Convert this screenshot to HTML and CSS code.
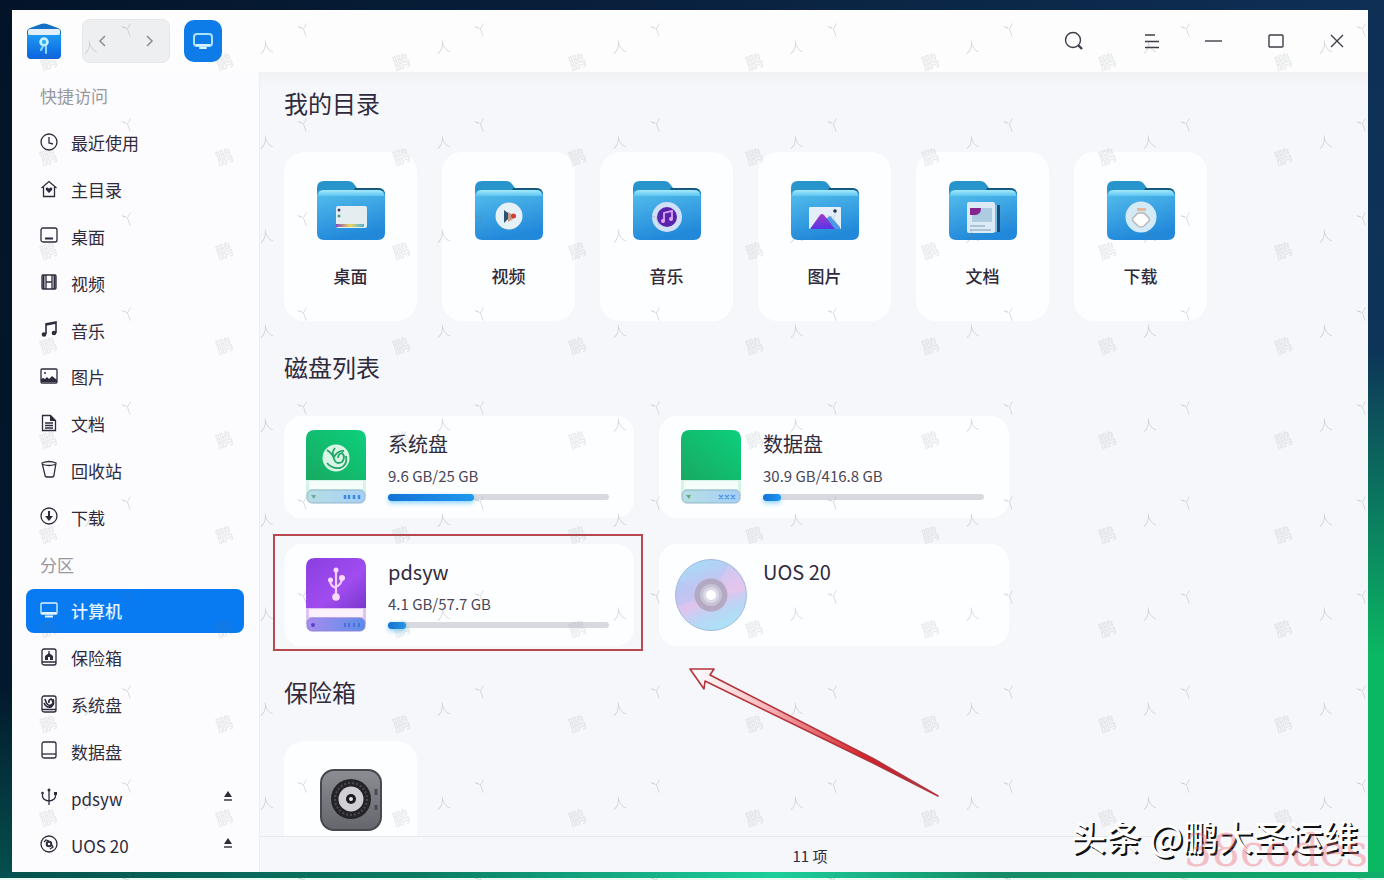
FILE: index.html
```html
<!DOCTYPE html>
<html lang="zh-CN">
<head>
    <meta charset="UTF-8">
    <meta name="viewport" content="width=device-width, initial-scale=1.0">
    <title>计算机</title>
    <link rel="stylesheet" href="styles.css">
</head>
<body>
    <!-- Shared shapes -->
    <svg class="defs" aria-hidden="true">
        <defs>
            <linearGradient id="folder-front" x1="0" y1="0" x2="0.3" y2="1">
                <stop offset="0" stop-color="#55bfec"/>
                <stop offset="1" stop-color="#2289da"/>
            </linearGradient>
            <linearGradient id="folder-shine" x1="0" y1="0" x2="0" y2="1">
                <stop offset="0" stop-color="#a5eaff"/>
                <stop offset="1" stop-color="#5cc5ef"/>
            </linearGradient>
            <linearGradient id="green" x1="1" y1="0" x2="0" y2="1">
                <stop offset="0" stop-color="#0cd07d"/>
                <stop offset="1" stop-color="#18a961"/>
            </linearGradient>
            <linearGradient id="purple" x1="0" y1="0" x2="1" y2="1">
                <stop offset="0" stop-color="#8a3fe0"/>
                <stop offset="0.6" stop-color="#a04cf0"/>
                <stop offset="1" stop-color="#7a38cc"/>
            </linearGradient>
            <linearGradient id="base-green" x1="0" y1="0" x2="1" y2="0">
                <stop offset="0" stop-color="#b5dfe3"/>
                <stop offset="1" stop-color="#a7cff8"/>
            </linearGradient>
            <linearGradient id="base-purple" x1="0" y1="0" x2="1" y2="0">
                <stop offset="0" stop-color="#a78cf0"/>
                <stop offset="1" stop-color="#5b8ee8"/>
            </linearGradient>
            <linearGradient id="mountain" x1="0" y1="0" x2="0" y2="1">
                <stop offset="0" stop-color="#a03cc8"/>
                <stop offset="1" stop-color="#5a34e8"/>
            </linearGradient>
            <linearGradient id="dock" x1="0" y1="0" x2="1" y2="0">
                <stop offset="0" stop-color="#8b4bb8"/>
                <stop offset="0.5" stop-color="#e8d85a"/>
                <stop offset="1" stop-color="#48b0e0"/>
            </linearGradient>
            <linearGradient id="safe-body" x1="0" y1="0" x2="0" y2="1">
                <stop offset="0" stop-color="#8d8d94"/>
                <stop offset="1" stop-color="#64656d"/>
            </linearGradient>
            <linearGradient id="disc" x1="0.3" y1="0" x2="0.7" y2="1">
                <stop offset="0" stop-color="#a5dcf6"/>
                <stop offset="0.3" stop-color="#bfc7f3"/>
                <stop offset="0.55" stop-color="#e0c4ee"/>
                <stop offset="0.75" stop-color="#b9d6f6"/>
                <stop offset="1" stop-color="#a9e6f6"/>
            </linearGradient>
            <linearGradient id="logo-body" x1="0" y1="0" x2="0" y2="1">
                <stop offset="0" stop-color="#1c9cf2"/>
                <stop offset="1" stop-color="#0c62e0"/>
            </linearGradient>
            <linearGradient id="arrow-fill" x1="0" y1="0" x2="1" y2="0">
                <stop offset="0" stop-color="#fff" stop-opacity="0.6"/>
                <stop offset="0.3" stop-color="#f7b9bc"/>
                <stop offset="0.7" stop-color="#d8232c"/>
                <stop offset="1" stop-color="#a5242c"/>
            </linearGradient>
            <symbol id="folder" viewBox="0 0 70 60">
                <path d="M1 14V8q0-7 7-7h24q4 0 6 3l3 4h21q7 0 7 7v8H1z" fill="#2795cb"/>
                <path d="M39 8h23q7 0 7 7l-2-2q-1-3-6-3H38z" fill="#17587c"/>
                <path d="M1 16q0-6 6-6h56q6 0 6 6v37q0 7-7 7H8q-7 0-7-7z" fill="url(#folder-front)"/>
                <path d="M2 16q0-6 6-6h54q6 0 6 6H2z" fill="url(#folder-shine)"/>
            </symbol>
            <symbol id="eject" viewBox="0 0 10 12">
                <path d="M5 1l4 6H1z" fill="#2f2a3c"/>
                <path d="M1 10h8" stroke="#2f2a3c" stroke-width="1.4"/>
            </symbol>
        </defs>
    </svg>

    <div class="desktop">
        <div class="window">
            <header class="titlebar">
                <svg class="logo" viewBox="0 0 36 36" aria-hidden="true">
                    <path d="M1 9q0-3 3-4l11-4q3-1 6 0l11 4q3 1 3 4v7H1z" fill="#1471c6"/>
                    <path d="M2 8q0-2 2-2h28q2 0 2 2v6H2z" fill="#e2eff8"/>
                    <path d="M1 11l3 1h28l3-1v21q0 4-4 4H5q-4 0-4-4z" fill="url(#logo-body)"/>
                    <circle cx="18" cy="19" r="3.500" fill="#35b4f2" stroke="#cdf1ff" stroke-width="2.500"/>
                    <path d="M17 23l-2 4M20 23v7" stroke="#8ed8fb" stroke-width="2" stroke-linecap="round"/>
                </svg>
                <div class="history">
                    <button type="button" aria-label="后退"><svg viewBox="0 0 12 14"><path d="M8 2L3 7l5 5"/></svg></button>
                    <button type="button" aria-label="前进"><svg viewBox="0 0 12 14"><path d="M4 2l5 5-5 5"/></svg></button>
                </div>
                <button type="button" class="location" aria-label="计算机">
                    <svg viewBox="0 0 20 18"><rect x="1" y="2" width="18" height="12" rx="3" fill="none" stroke="#a9e3ff" stroke-width="2"/><path d="M2 12h16l-2 2H4z" fill="#d9f4ff"/><path d="M7 16h6" stroke="#d9f4ff" stroke-width="2" stroke-linecap="round"/></svg>
                </button>
                <div class="controls">
                    <button type="button" aria-label="搜索"><svg viewBox="0 0 20 20"><circle cx="10" cy="9" r="7.500"/><path d="M15.500 14.500L19 18" stroke-width="2.400"/></svg></button>
                    <button type="button" class="wide" aria-label="菜单"><svg viewBox="0 0 20 20"><path d="M4 4h10M4 10.500h14M4 16.500h14"/></svg></button>
                    <button type="button" aria-label="最小化"><svg viewBox="0 0 20 20"><path d="M2 10h17"/></svg></button>
                    <button type="button" aria-label="最大化"><svg viewBox="0 0 20 20"><rect x="4" y="4" width="14" height="12" rx="1"/></svg></button>
                    <button type="button" aria-label="关闭"><svg viewBox="0 0 20 20"><path d="M4 4l12 12M16 4L4 16"/></svg></button>
                </div>
            </header>

            <div class="body">
                <nav class="sidebar" aria-label="位置">
                    <h2 class="group">快捷访问</h2>
                    <a class="place" href="#recent"><svg class="icon" viewBox="0 0 18 18"><circle cx="9" cy="9" r="8"/><path d="M9 4v6l4 1"/></svg>最近使用</a>
                    <a class="place" href="#home"><svg class="icon" viewBox="0 0 18 18"><path d="M1.500 8L9 1.500 16.500 8M3.500 7v9.500h11V7"/><path class="solid" d="M9 13L6 10q-1-2 1-2.500 1.300 0 2 1.200.7-1.200 2-1.200 2 .5 1 2.500z"/></svg>主目录</a>
                    <a class="place" href="#desktop"><svg class="icon" viewBox="0 0 18 18"><rect x="1" y="2" width="16" height="14" rx="2"/><path d="M5 12.500h8" stroke-width="2"/></svg>桌面</a>
                    <a class="place" href="#videos"><svg class="icon" viewBox="0 0 18 18"><rect x="2" y="2" width="14" height="14" rx="1"/><path d="M3.500 2v14M14.500 2v14" stroke-width="2"/><path d="M6 2v14M12 2v14M6 9h6"/></svg>视频</a>
                    <a class="place" href="#music"><svg class="icon" viewBox="0 0 18 18"><path d="M6 14V4l10-2v11M6 5l10-2" stroke-width="1.600"/><circle class="solid" cx="4" cy="14.500" r="2.300"/><circle class="solid" cx="14" cy="13" r="2.300"/></svg>音乐</a>
                    <a class="place" href="#pictures"><svg class="icon" viewBox="0 0 18 18"><rect x="1" y="2" width="16" height="14" rx="1"/><path class="solid" d="M1 15v-3l2-1 2 1 2-2 2 2 3-3 5 4v2z"/><circle class="solid" cx="5" cy="6" r="1"/></svg>图片</a>
                    <a class="place" href="#documents"><svg class="icon" viewBox="0 0 18 18"><path d="M2.500 1.500h8l5 5v10h-13z"/><path class="solid" d="M10 1l6 6h-6z"/><path d="M5 9h8M5 11.500h8M5 14h8"/></svg>文档</a>
                    <a class="place" href="#trash"><svg class="icon" viewBox="0 0 18 18"><path d="M2 3q7-3 14 0l-2 12q0 2-2 2H7q-2 0-2-2zM3 4.500q6 2 12 0"/></svg>回收站</a>
                    <a class="place" href="#downloads"><svg class="icon" viewBox="0 0 18 18"><circle cx="9" cy="9" r="8"/><path d="M9 4v8" stroke-width="2"/><path class="solid" d="M5 9h8l-4 5z"/></svg>下载</a>
                    <h2 class="group">分区</h2>
                    <a class="place active" href="#computer" aria-current="page"><svg class="icon" viewBox="0 0 18 18"><rect x="1" y="2" width="16" height="11" rx="1"/><path d="M2 12h14" stroke-width="2"/><path d="M5 15.500h8" stroke-width="2"/></svg>计算机</a>
                    <a class="place" href="#vault"><svg class="icon" viewBox="0 0 18 18"><rect x="2" y="1" width="14" height="16" rx="2"/><path d="M2 14h14M9 3v3"/><path class="solid" d="M5 8l4-3 4 3v4h-3V9H8v3H5z"/></svg>保险箱</a>
                    <a class="place" href="#system"><svg class="icon" viewBox="0 0 18 18"><rect x="2" y="1" width="14" height="16" rx="2"/><path d="M2 14.500h14M5 4q2 8 6 6t0-6q-3 1-2 4M13 4q2 5-2 8-5 1-7-4" stroke-width="1.600"/></svg>系统盘</a>
                    <a class="place" href="#data"><svg class="icon" viewBox="0 0 18 18"><rect x="2" y="1" width="14" height="16" rx="2"/><path d="M2 13h14"/></svg>数据盘</a>
                    <div class="mount">
                        <a class="place" href="#pdsyw"><svg class="icon" viewBox="0 0 18 18"><path d="M9 2v15M2.500 5v3q0 4 6.500 5 6.500-1 6.500-5V5"/><circle class="solid" cx="9" cy="2" r="1.500"/><circle class="solid" cx="2.500" cy="5" r="1.300"/><path class="solid" d="M14 4h3v3h-3z"/></svg>pdsyw</a>
                        <button type="button" class="eject" aria-label="弹出 pdsyw"><svg><use href="#eject"/></svg></button>
                    </div>
                    <div class="mount">
                        <a class="place" href="#uos20"><svg class="icon" viewBox="0 0 18 18"><circle cx="9" cy="9" r="8"/><circle cx="9" cy="9" r="2.300" stroke-width="2"/><path d="M4 7l2-2 3 1M12 10l1 2-3 2"/></svg>UOS 20</a>
                        <button type="button" class="eject" aria-label="弹出 UOS 20"><svg><use href="#eject"/></svg></button>
                    </div>
                </nav>

                <div class="pane">
                    <main class="content">
                        <section>
                            <h1 class="heading">我的目录</h1>
                            <div class="folders">
                                <a class="folder" href="#desktop">
                                    <svg viewBox="0 0 70 60"><use href="#folder"/><rect x="20" y="26" width="31" height="22" rx="2" fill="#e4eef0"/><rect x="20" y="44" width="28" height="3" fill="url(#dock)"/><circle cx="23" cy="30" r="1.500" fill="#4a3868"/><circle cx="23" cy="36" r="1.500" fill="#3f9d8f"/></svg>
                                    桌面
                                </a>
                                <a class="folder" href="#videos">
                                    <svg viewBox="0 0 70 60"><use href="#folder"/><circle cx="35" cy="36" r="13.500" fill="#e6f0f7"/><path d="M30 30l4 3v6l-4 4z" fill="#2b5273"/><path d="M34 32l5 3v4l-5 3z" fill="#c79c8c"/><circle cx="39.500" cy="36" r="2.500" fill="#d43c36"/></svg>
                                    视频
                                </a>
                                <a class="folder" href="#music">
                                    <svg viewBox="0 0 70 60"><use href="#folder"/><circle cx="35" cy="37" r="15" fill="#cfe0f7"/><circle cx="35" cy="37" r="10" fill="#5923ae"/><path d="M32 41v-8l8-2v8" fill="none" stroke="#d9a5f5" stroke-width="1.800"/><circle cx="31" cy="41" r="2" fill="#e3a8f3"/><circle cx="39" cy="39" r="2" fill="#e3a8f3"/></svg>
                                    音乐
                                </a>
                                <a class="folder" href="#pictures">
                                    <svg viewBox="0 0 70 60"><use href="#folder"/><rect x="19" y="27" width="32" height="22" rx="1" fill="#e5effa"/><path d="M34 40l6-4 10 11v2H38z" fill="#4c9be8"/><path d="M20 49l10-14q2-2 4 0l11 14z" fill="url(#mountain)"/><circle cx="45" cy="31" r="1.800" fill="#273347"/></svg>
                                    图片
                                </a>
                                <a class="folder" href="#documents">
                                    <svg viewBox="0 0 70 60"><use href="#folder"/><path d="M47 25h5v27h-5z" fill="#214b77"/><rect x="19" y="22" width="28" height="31" rx="2" fill="#dceaf5"/><path d="M24 38V28h20v14H24z" fill="#adcbe1"/><path d="M22 28h11q0 7-6 7h-5z" fill="#86238f"/><path d="M22 46h15M22 50h21" stroke="#9ab9cd" stroke-width="1.500"/><path d="M48 25v27" stroke="#77bfe9" stroke-width="2"/></svg>
                                    文档
                                </a>
                                <a class="folder" href="#downloads">
                                    <svg viewBox="0 0 70 60"><use href="#folder"/><circle cx="35" cy="37" r="15.500" fill="#d5eaf7"/><path d="M31 28h9v3h-9z" fill="#e2b79f"/><path d="M33 33h4q2 0 3 2l3 3q1 2 0 3l-5 5q-3 2-6 0l-5-5q-1-1 0-3l3-3q1-2 3-2z" fill="#fff" stroke="#b6b6b4" stroke-width="1.500"/></svg>
                                    下载
                                </a>
                            </div>
                        </section>

                        <section>
                            <h1 class="heading">磁盘列表</h1>
                            <div class="disks">
                                <a class="disk" href="#system">
                                    <svg class="drive" viewBox="0 0 60 74"><path d="M0 48h60v18H0z" fill="#d5f4e6"/><path d="M3 51h54v8H3z" fill="#f5fdfb"/><path d="M0 50V9q0-9 9-9h42q9 0 9 9v41z" fill="url(#green)"/><rect x="1" y="60" width="58" height="13" rx="5" fill="url(#base-green)" stroke="#93b6c8"/><path d="M5 65h5l-2 4z" fill="#74a596"/><path d="M39 65v4M43 65v4M48 65v4M53 65v4" stroke="#3c8be0" stroke-width="2.500"/><circle cx="30" cy="28" r="13.500" fill="#d9f5e5"/><path d="M21 20q6 4 7 9 2 6 8 3 4-5 0-9-4 1-4 5M29 18q-4 5-1 9 4-7 10-6M40 26q2 9-6 12-8 1-13-5" fill="none" stroke="#20a765" stroke-width="1.800"/></svg>
                                    <div class="info">
                                        <h2>系统盘</h2>
                                        <p>9.6 GB/25 GB</p>
                                        <div class="track"><div class="used" style="width: 39%"></div></div>
                                    </div>
                                </a>
                                <a class="disk" href="#data">
                                    <svg class="drive" viewBox="0 0 60 74"><path d="M0 48h60v18H0z" fill="#d5f4e6"/><path d="M3 51h54v8H3z" fill="#f5fdfb"/><path d="M0 50V9q0-9 9-9h42q9 0 9 9v41z" fill="url(#green)"/><rect x="1" y="60" width="58" height="13" rx="5" fill="url(#base-green)" stroke="#93b6c8"/><path d="M5 65h5l-2 4z" fill="#62ad76"/><path d="M38 65l4 4M38 69l4-4M44 65l4 4M44 69l4-4M50 65l4 4M50 69l4-4" stroke="#4a96e8" stroke-width="1.500"/></svg>
                                    <div class="info">
                                        <h2>数据盘</h2>
                                        <p>30.9 GB/416.8 GB</p>
                                        <div class="track"><div class="used" style="width: 8%"></div></div>
                                    </div>
                                </a>
                                <a class="disk marked" href="#pdsyw">
                                    <svg class="drive" viewBox="0 0 60 74"><path d="M0 48h60v18H0z" fill="#dfc3f7"/><path d="M3 51h54v8H3z" fill="#faf0fe"/><path d="M0 50V9q0-9 9-9h42q9 0 9 9v41z" fill="url(#purple)"/><rect x="1" y="60" width="58" height="13" rx="5" fill="url(#base-purple)" stroke="#8f86d8"/><circle cx="7" cy="67" r="2" fill="#5344c8"/><path d="M39 65v4M43 65v4M48 65v4M53 65v4" stroke="#4a6fd6" stroke-width="2"/><g fill="none" stroke="#f3cdfb" stroke-width="2.200"><path d="M30 13v25M24 22q0 6 6 8M36 20q0 6-6 9"/></g><g fill="#f8d9fd"><circle cx="30" cy="12" r="2.500"/><circle cx="24.500" cy="22" r="2.500"/><circle cx="36" cy="20" r="3"/><circle cx="30" cy="39" r="3.800"/></g></svg>
                                    <div class="info">
                                        <h2>pdsyw</h2>
                                        <p>4.1 GB/57.7 GB</p>
                                        <div class="track"><div class="used" style="width: 8%"></div></div>
                                    </div>
                                </a>
                                <a class="disk" href="#uos20">
                                    <svg class="cd" viewBox="0 0 72 74"><circle cx="36" cy="37" r="35.500" fill="url(#disc)" stroke="#a4b9dc"/><path d="M36 37L54 7q14 10 16 27z" fill="#efc8ea" opacity="0.4"/><path d="M36 37L3 48q-4-13 2-25z" fill="#b5c2f4" opacity="0.4"/><circle cx="36" cy="37" r="16.500" fill="#b3a9c2"/><circle cx="36" cy="37" r="11" fill="#c7c2d4"/><circle cx="36" cy="37" r="8" fill="#ddd8e8"/><circle cx="36" cy="37" r="5" fill="#fff"/></svg>
                                    <div class="info">
                                        <h2>UOS 20</h2>
                                    </div>
                                </a>
                            </div>
                        </section>

                        <section>
                            <h1 class="heading">保险箱</h1>
                            <div class="folders">
                                <a class="folder" href="#vault" aria-label="保险箱">
                                    <svg class="safe" viewBox="0 0 62 62"><rect x="1" y="1" width="60" height="60" rx="13" fill="url(#safe-body)" stroke="#47474f" stroke-width="2"/><circle cx="31" cy="30" r="20" fill="#242428"/><circle cx="31" cy="30" r="16" fill="none" stroke="#4a4a50" stroke-width="2" stroke-dasharray="2 2"/><circle cx="31" cy="30" r="12.500" fill="#cfcfd5"/><circle cx="31" cy="30" r="5" fill="#1c1c20"/><circle cx="31" cy="30" r="2" fill="#e8e8ec"/><path d="M56 20v6M56 36v5" stroke="#4a4a52" stroke-width="3"/></svg>
                                </a>
                            </div>
                        </section>
                    </main>
                    <footer class="statusbar">11 项</footer>
                </div>
            </div>
        </div>
    </div>

    <svg class="stamp" aria-hidden="true">
        <defs>
            <pattern id="stamp-tile" width="353" height="189" patternUnits="userSpaceOnUse">
                <g id="stamp-mark">
                    <text class="dense" x="40" y="68" transform="rotate(-20 49 62)">鹏</text>
                    <text x="83" y="52" transform="rotate(-8 90 47)">人</text>
                    <text x="121" y="36" transform="rotate(-20 128 31)">丫</text>
                </g>
                <use href="#stamp-mark" x="176"/>
                <use href="#stamp-mark" y="95"/>
                <use href="#stamp-mark" x="176" y="95"/>
            </pattern>
        </defs>
        <rect width="100%" height="100%" fill="url(#stamp-tile)"/>
    </svg>

    <svg class="arrow" viewBox="0 0 252 132" aria-hidden="true">
        <path d="M2 3h24l-4 6L186 93l64 37-65-33L17 15l-1 8z" fill="url(#arrow-fill)" stroke="#b3343c" stroke-width="1.600" stroke-linejoin="round"/>
    </svg>
    <div class="author-mark">头条 @鹏大圣运维</div>
    <div class="site-mark">38codes</div>
</body>
</html>
```

FILE: styles.css
```css
* {
    box-sizing: border-box;
}

body {
    margin: 0;
    height: 100vh;
    position: relative;
    overflow: hidden;
    font-family: "Noto Sans CJK SC", "Noto Sans", sans-serif;
    color: #2f2a3c;
    background: #e9fbf3;
}

h1, h2, p {
    margin: 0;
    font-weight: 400;
}

a {
    color: inherit;
    text-decoration: none;
}

button {
    border: 0;
    padding: 0;
    background: none;
    display: flex;
    align-items: center;
    justify-content: center;
    cursor: pointer;
}

.defs {
    position: absolute;
    width: 0;
    height: 0;
}

.desktop {
    height: calc(100vh - 2px);
    padding: 10px 16px 6px 12px;
    background:
        linear-gradient(90deg, #05504e, #0a7a62 30%, #1ccf9a 56%, #158a66 72%, #0fae6b) bottom / 100% 6px no-repeat,
        linear-gradient(180deg, #0f2f55, #0d3558 40%, #0b7a60 58%, #0bb862 75%) right / 16px 100% no-repeat,
        linear-gradient(180deg, #031428, #02182c 78%, #05504e) left / 12px 100% no-repeat,
        linear-gradient(90deg, #031428, #0f2f55);
}

.window {
    height: 100%;
    display: flex;
    flex-direction: column;
    background: #fcfcfe;
}

/* Title bar */
.titlebar {
    height: 62px;
    flex-shrink: 0;
    display: flex;
    align-items: center;
    padding: 0 16px 0 14px;
    background: #fdfdfe;
}

.logo {
    width: 36px;
    height: 36px;
    margin-right: 20px;
}

.history {
    width: 88px;
    height: 44px;
    display: flex;
    justify-content: space-between;
    padding: 0 14px;
    margin-right: 14px;
    border: 1px solid #e6e7ea;
    border-radius: 8px;
    background: #eeeff1;
}

.history svg {
    width: 12px;
    height: 14px;
    fill: none;
    stroke: #8d8e95;
    stroke-width: 1.5;
}

.location {
    width: 38px;
    height: 42px;
    border-radius: 10px;
    background: #0d7ce8;
}

.location svg {
    width: 20px;
    height: 18px;
}

.controls {
    margin-left: auto;
    display: flex;
    gap: 32px;
}

.controls button {
    width: 30px;
    height: 30px;
}

.controls .wide {
    margin-left: 16px;
}

.controls svg {
    width: 20px;
    height: 20px;
    fill: none;
    stroke: #3f3d48;
    stroke-width: 1.4;
}

.body {
    flex: 1;
    min-height: 0;
    display: flex;
}

/* Sidebar */
.sidebar {
    width: 247px;
    flex-shrink: 0;
    padding: 2px 15px 5px 14px;
    display: grid;
    grid-auto-rows: minmax(32px, 1fr);
    gap: 3px;
    font-size: 17px;
    overflow: hidden;
}

.group {
    display: flex;
    align-items: center;
    padding-left: 14px;
    font-size: 17px;
    color: #97979e;
}

.place {
    flex: 1;
    display: flex;
    align-items: center;
    gap: 13px;
    padding-left: 14px;
    border-radius: 8px;
}

.icon {
    width: 18px;
    height: 18px;
    margin-bottom: 2px;
    fill: none;
    stroke: currentColor;
    stroke-width: 1.3;
}

.icon .solid {
    fill: currentColor;
    stroke: none;
}

.place.active {
    background: #087bf3;
    color: #e2f4ff;
    font-weight: 500;
}

.mount {
    display: flex;
}

.eject {
    width: 32px;
}

.eject svg {
    width: 10px;
    height: 12px;
    margin-bottom: 4px;
}

/* File pane */
.pane {
    flex: 1;
    min-width: 0;
    display: flex;
    flex-direction: column;
    border-left: 1px solid #eceef3;
    background: linear-gradient(180deg, #f1f2f4, #f6f7fb 16px);
}

.content {
    flex: 1;
    min-height: 0;
    padding: 13px 24px 0;
    display: flex;
    flex-direction: column;
    gap: 28px;
    overflow: hidden;
}

.heading {
    margin-bottom: 32px;
    font-size: 24px;
    line-height: 35px;
}

.folders {
    display: grid;
    grid-template-columns: repeat(auto-fill, 133px);
    gap: 25px;
}

.folder {
    height: 169px;
    padding-top: 28px;
    display: flex;
    flex-direction: column;
    align-items: center;
    gap: 24px;
    border-radius: 20px;
    background: #fdfeff;
    font-size: 17px;
    font-weight: 500;
    line-height: 24px;
}

.folder svg {
    width: 70px;
    height: 60px;
}

.folder .safe {
    width: 62px;
    height: 62px;
}

.disks {
    display: grid;
    grid-template-columns: repeat(auto-fill, 350px);
    gap: 26px 25px;
}

.disk {
    position: relative;
    height: 102px;
    display: grid;
    grid-template-columns: 104px 1fr;
    padding-right: 25px;
    border-radius: 18px;
    background: #fdfeff;
}

.disk.marked::after {
    content: "";
    position: absolute;
    inset: -10px -9px -5px -11px;
    border: 2px solid #b8474e;
}

.drive,
.cd {
    align-self: center;
    justify-self: center;
    width: 60px;
    height: 74px;
}

.cd {
    width: 72px;
}

.info {
    padding-top: 14px;
}

.info h2 {
    font-size: 20px;
    line-height: 28px;
}

.info p {
    margin: 7px 0;
    font-size: 15px;
    line-height: 22px;
    color: #4b4757;
}

.track {
    height: 6px;
    border-radius: 3px;
    background: #d9dadf;
}

.used {
    height: 7px;
    border-radius: 4px;
    background: linear-gradient(90deg, #1272d6, #2098ee);
    box-shadow: 0 2px 5px #86d0fa;
}

.statusbar {
    height: 36px;
    flex-shrink: 0;
    padding: 5px 8px 0 0;
    border-top: 1px solid #e7e9ed;
    font-size: 15px;
    line-height: 28px;
    text-align: center;
}

/* Marks laid over the window */
.stamp {
    position: absolute;
    inset: 0;
    width: 100%;
    height: 100%;
    pointer-events: none;
}

.stamp text {
    font-size: 14px;
    font-weight: 300;
    fill: #64726f;
    fill-opacity: 0.3;
}

.stamp .dense {
    font-size: 17px;
    font-weight: 700;
    fill-opacity: 0.12;
}

.arrow {
    position: absolute;
    left: 688px;
    top: 666px;
    width: 252px;
    height: 132px;
    pointer-events: none;
}

.site-mark {
    position: absolute;
    right: 16px;
    bottom: 3px;
    font-family: "DejaVu Serif", serif;
    font-size: 44px;
    line-height: 52px;
    color: rgba(240, 100, 110, 0.4);
}

.author-mark {
    position: absolute;
    right: 26px;
    bottom: 18px;
    font-size: 35px;
    font-weight: 500;
    line-height: 52px;
    color: #fff;
    text-shadow: 2px 2px 0 #111;
}
```
